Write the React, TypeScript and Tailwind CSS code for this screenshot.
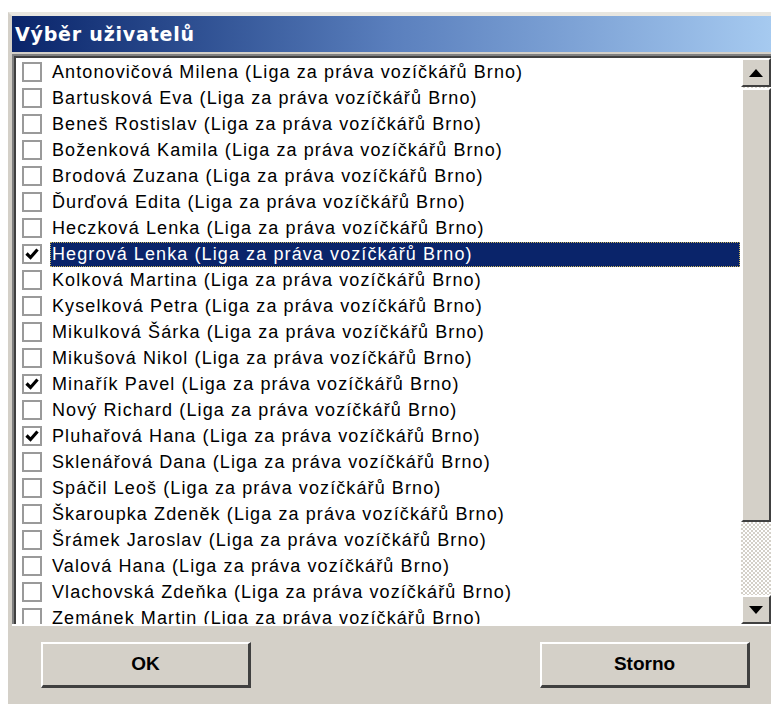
import React from "react";

type Person = { name: string; checked?: boolean; selected?: boolean };

const ORG = " (Liga za práva vozíčkářů Brno)";

const people: Person[] = [
  { name: "Antonovičová Milena" },
  { name: "Bartusková Eva" },
  { name: "Beneš Rostislav" },
  { name: "Boženková Kamila" },
  { name: "Brodová Zuzana" },
  { name: "Ďurďová Edita" },
  { name: "Heczková Lenka" },
  { name: "Hegrová Lenka", checked: true, selected: true },
  { name: "Kolková Martina" },
  { name: "Kyselková Petra" },
  { name: "Mikulková Šárka" },
  { name: "Mikušová Nikol" },
  { name: "Minařík Pavel", checked: true },
  { name: "Nový Richard" },
  { name: "Pluhařová Hana", checked: true },
  { name: "Sklenářová Dana" },
  { name: "Spáčil Leoš" },
  { name: "Škaroupka Zdeněk" },
  { name: "Šrámek Jaroslav" },
  { name: "Valová Hana" },
  { name: "Vlachovská Zdeňka" },
  { name: "Zemánek Martin" },
];

const Check = ({ on }: { on?: boolean }) => (
  <div className="w-[20px] h-[20px] shrink-0 border-2 border-[#9a9a9a] bg-white flex items-center justify-center">
    {on && (
      <svg width="14" height="14" viewBox="0 0 14 14">
        <path d="M1.5 6.5 L5.5 10.5 L12.5 2.5" stroke="#000" strokeWidth="3.2" fill="none" />
      </svg>
    )}
  </div>
);

const Row = ({ p }: { p: Person }) => (
  <div className="h-[26px] flex items-center pl-[6px] shrink-0">
    <Check on={p.checked} />
    <div
      className={`ml-[8px] h-[25px] flex items-center pl-[2px] whitespace-nowrap ${
        p.selected
          ? "bg-[#0a246a] text-white outline-1 outline-dotted outline-[#c9b45a] -outline-offset-1 w-[690px]"
          : "text-black"
      }`}
    >
      {p.name}
      {ORG}
    </div>
  </div>
);

const Btn = ({ label }: { label: string }) => (
  <button className="w-[210px] h-[46px] bg-[#d4d0c8] border-t-2 border-l-2 border-[#ffffff] border-b-[3px] border-r-[3px] border-b-[#404040] border-r-[#404040] font-bold text-[19px] text-black">
    {label}
  </button>
);

const ScrollBtn = ({ up }: { up?: boolean }) => (
  <div className="h-[29px] w-full shrink-0 bg-[#d4d0c8] border-t-2 border-l-2 border-white border-b-2 border-r-2 border-b-[#404040] border-r-[#404040] flex items-center justify-center">
    <svg width="14" height="8" viewBox="0 0 14 8">
      {up ? <path d="M0 8 L7 0 L14 8 Z" fill="#000" /> : <path d="M0 0 L7 8 L14 0 Z" fill="#000" />}
    </svg>
  </div>
);

export default function App() {
  return (
    <div
      className="w-[771px] h-[704px] bg-white pt-[12px] pl-[8px] overflow-hidden"
      style={{ fontFamily: '"Liberation Sans", Arial, sans-serif' }}
    >
      <div className="h-full bg-[#d4d0c8] border-l-[4px] border-t-[4px] border-l-[#d4d0c8] border-t-[#e8e6e0] flex flex-col">
        <div className="h-[36px] shrink-0 bg-gradient-to-r from-[#0a246a] via-[#5a7fbd] to-[#a6caf0] flex items-center pl-[3px]">
          <span
            className="text-white font-bold text-[19px] tracking-[0.8px]"
            style={{ fontFamily: '"DejaVu Sans", Verdana, sans-serif' }}
          >
            Výběr uživatelů
          </span>
        </div>

        <div className="h-[570px] shrink-0 mt-[2px] border-t-2 border-l-2 border-[#808080] flex">
          <div className="flex-1 flex bg-white border-t-2 border-l-2 border-[#404040]">
            <div className="flex-1 flex flex-col overflow-hidden pt-[1px] text-[18px] tracking-[1.1px]">
              {people.map((p) => (
                <Row key={p.name} p={p} />
              ))}
            </div>
            <div className="w-[30px] shrink-0 flex flex-col bg-[#e4e2dc] bg-[repeating-conic-gradient(#d4d0c8_0_25%,#ffffff_0_50%)] bg-[length:4px_4px]">
              <ScrollBtn up />
              <div className="h-[434px] shrink-0 mt-[1px] bg-[#d4d0c8] border-t-2 border-l-2 border-white border-b-2 border-r-2 border-b-[#404040] border-r-[#404040]" />
              <div className="flex-1" />
              <ScrollBtn />
            </div>
          </div>
        </div>

        <div className="flex-1 flex items-center justify-between pl-[29px] pr-[21px] border-t-2 border-white">
          <Btn label="OK" />
          <Btn label="Storno" />
        </div>
      </div>
    </div>
  );
}
